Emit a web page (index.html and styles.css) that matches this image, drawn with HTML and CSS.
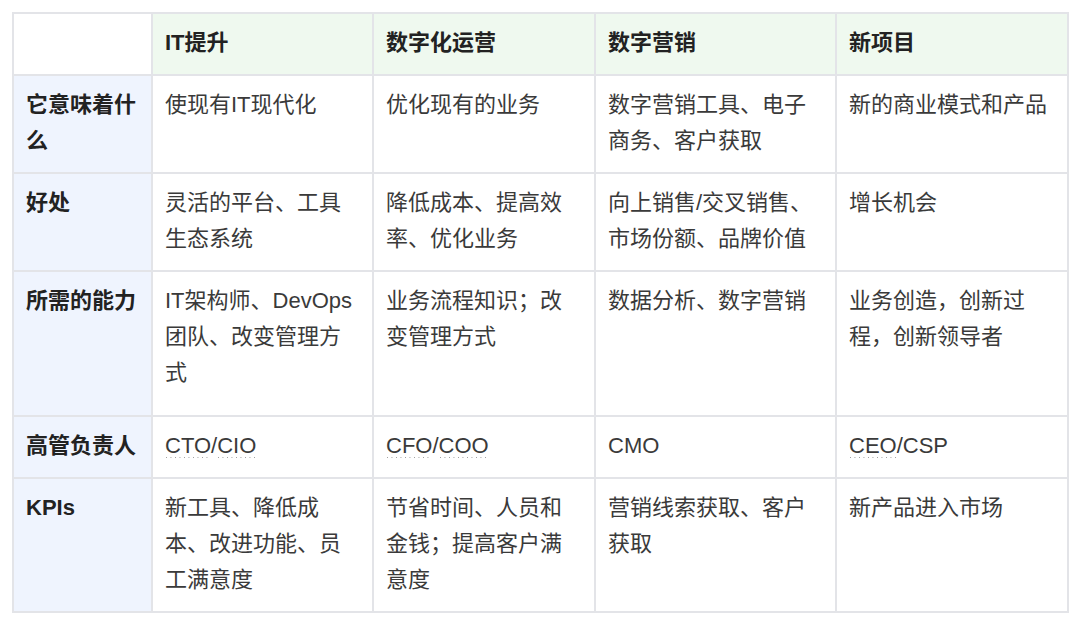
FILE: index.html
```html
<!DOCTYPE html>
<html lang="zh-CN">
<head>
<meta charset="utf-8">
<title>数字化转型对比</title>
<link rel="stylesheet" href="styles.css">
</head>
<body>
<main class="page">
  <table class="grid">
    <thead>
      <tr class="row-head">
        <th class="corner c1"></th>
        <th class="colhead c2">IT提升</th>
        <th class="colhead c3">数字化运营</th>
        <th class="colhead c4">数字营销</th>
        <th class="colhead c5">新项目</th>
      </tr>
    </thead>
    <tbody>
      <tr class="row-a">
        <th class="rowhead">它意味着什么</th>
        <td>使现有IT现代化</td>
        <td>优化现有的业务</td>
        <td>数字营销工具、电子商务、客户获取</td>
        <td>新的商业模式和产品</td>
      </tr>
      <tr class="row-b">
        <th class="rowhead">好处</th>
        <td>灵活的平台、工具生态系统</td>
        <td>降低成本、提高效率、优化业务</td>
        <td>向上销售/交叉销售、市场份额、品牌价值</td>
        <td>增长机会</td>
      </tr>
      <tr class="row-c">
        <th class="rowhead">所需的能力</th>
        <td>IT架构师、DevOps团队、改变管理方式</td>
        <td>业务流程知识；改变管理方式</td>
        <td>数据分析、数字营销</td>
        <td>业务创造，创新过程，创新领导者</td>
      </tr>
      <tr class="row-d">
        <th class="rowhead">高管负责人</th>
        <td><abbr class="abbr" title="首席技术官">CTO</abbr>/<abbr class="abbr" title="首席信息官">CIO</abbr></td>
        <td><abbr class="abbr" title="首席财务官">CFO</abbr>/<abbr class="abbr" title="首席运营官">COO</abbr></td>
        <td>CMO</td>
        <td><abbr class="abbr" title="首席执行官">CEO</abbr>/CSP</td>
      </tr>
      <tr class="row-e">
        <th class="rowhead">KPIs</th>
        <td>新工具、降低成本、改进功能、员工满意度</td>
        <td>节省时间、人员和金钱；提高客户满意度</td>
        <td>营销线索获取、客户获取</td>
        <td>新产品进入市场</td>
      </tr>
    </tbody>
  </table>
</main>
</body>
</html>
```

FILE: styles.css
```css
html, body {
  margin: 0;
  padding: 0;
  background: #ffffff;
}

.page {
  padding: 12px 0 0 12px;
}

.grid {
  table-layout: fixed;
  width: 1057px;
  border-collapse: separate;
  border-spacing: 0;
  border-top: 2px solid #e3e4e8;
  border-left: 2px solid #e3e4e8;
  font-family: "Liberation Sans", "Noto Sans CJK SC", sans-serif;
  font-size: 22px;
  line-height: 36px;
  color: #3a3a3a;
}

.grid th,
.grid td {
  box-sizing: border-box;
  padding: 11px 12px 13px;
  border-right: 2px solid #e3e4e8;
  border-bottom: 2px solid #e3e4e8;
  text-align: left;
  vertical-align: top;
  font-weight: normal;
}

.c1 { width: 139px; }
.c2 { width: 221px; }
.c3 { width: 222px; }
.c4 { width: 241px; }
.c5 { width: 232px; }

.grid .colhead {
  background: #eff9ef;
  font-weight: bold;
  color: #222222;
  vertical-align: middle;
}

.grid .corner {
  background: #ffffff;
}

.grid .rowhead {
  background: #eff4fe;
  font-weight: bold;
  color: #222222;
}

.row-head { height: 62px; }
.row-a { height: 97px; }
.row-b { height: 97px; }
.row-c { height: 145px; }
.row-d { height: 62px; }
.row-e { height: 132px; }

.abbr {
  text-decoration: none;
  background-image: linear-gradient(to right, #9a9a9a 1px, transparent 1px);
  background-size: 4.5px 1.5px;
  background-repeat: repeat-x;
  background-position: 1px 100%;
}
```
